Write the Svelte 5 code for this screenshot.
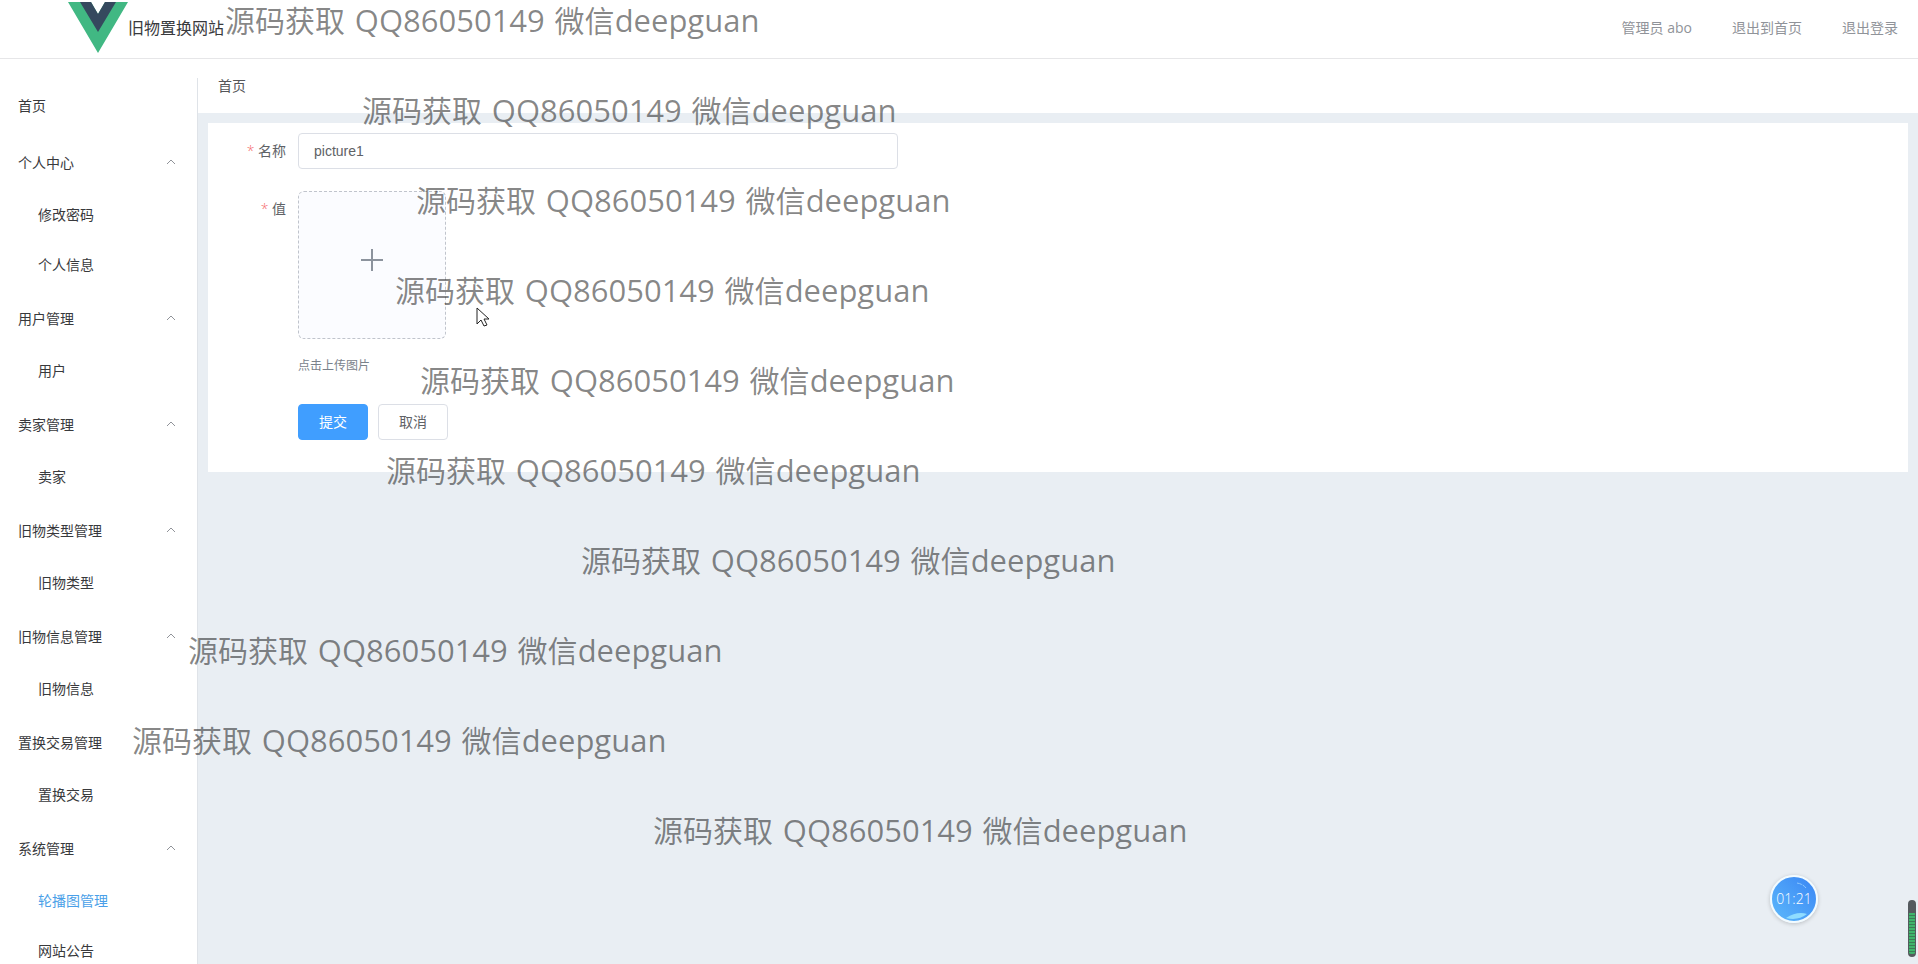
<script>
  const groups = [
    { title: '个人中心', items: ['修改密码', '个人信息'] },
    { title: '用户管理', items: ['用户'] },
    { title: '卖家管理', items: ['卖家'] },
    { title: '旧物类型管理', items: ['旧物类型'] },
    { title: '旧物信息管理', items: ['旧物信息'] },
    { title: '置换交易管理', items: ['置换交易'] },
    { title: '系统管理', items: ['轮播图管理', '网站公告'] }
  ];
  const active = '轮播图管理';
  const marks = [225, 362, 416, 395, 420, 386, 581, 188, 132, 653];
  let name = $state('picture1');
</script>

<div class="page">
  <header>
    <div class="brand">
      <svg class="logo" viewBox="0 0 60 51" aria-hidden="true">
        <path fill="#41b883" d="M0 0h23l7 12 7-12h23L30 51z" />
        <path fill="#35495e" d="M12 0h11l7 12 7-12h11L30 30z" />
      </svg>
      <span>旧物置换网站</span>
    </div>
    <nav class="user">
      <span>管理员 abo</span>
      <a href="#front">退出到首页</a>
      <a href="#logout">退出登录</a>
    </nav>
  </header>

  <div class="body">
    <aside>
      <a class="head" href="#home">首页</a>
      {#each groups as group}
        <button class="head" type="button" aria-expanded="true">
          {group.title}
          {#if group.title !== '置换交易管理'}
            <svg viewBox="0 0 12 12" aria-hidden="true"><path d="M2 8l4-4 4 4" /></svg>
          {/if}
        </button>
        {#each group.items as item}
          <a class="sub" class:active={item === active} href="#{item}">{item}</a>
        {/each}
      {/each}
    </aside>

    <main>
      <div class="crumb">首页</div>
      <form class="card" onsubmit={(e) => e.preventDefault()}>
        <div class="row">
          <label for="name"><i>*</i> 名称</label>
          <input id="name" type="text" bind:value={name} />
        </div>
        <div class="row">
          <label for="upload"><i>*</i> 值</label>
          <div>
            <button id="upload" class="upload" type="button" aria-label="点击上传图片">
              <svg viewBox="0 0 24 24" aria-hidden="true"><path d="M12 1v22M1 12h22" /></svg>
            </button>
            <p>点击上传图片</p>
          </div>
        </div>
        <div class="actions">
          <button class="btn primary" type="submit">提交</button>
          <button class="btn" type="button">取消</button>
        </div>
      </form>
    </main>
  </div>

  {#each marks as x, i}
    <div class="mark" style="left: {x}px; top: {i * 90}px">源码获取 <span class="qq">QQ86050149</span>{' '}微信<span>deepguan</span></div>
  {/each}

  <svg class="cursor" viewBox="0 0 13 20" aria-hidden="true">
    <path d="M1 1v16l4-4 3 6 3-1-3-6h5z" />
  </svg>
  <div class="timer">
    <svg viewBox="0 0 44 44" aria-hidden="true">
      <path d="M14 41q11-7 21-4-9 7-21 4z" fill="#8fdcff" />
      <path d="M25 6q6 1 9 5" fill="none" stroke="#8cc8ff" stroke-width="1" stroke-dasharray="5 1" />
    </svg>
    <span>01:21</span>
  </div>
  <div class="meter"></div>
</div>

<style>
  :global(body) {
    margin: 0;
    overflow: hidden;
  }
  .page {
    position: relative;
    display: flex;
    flex-direction: column;
    height: 100vh;
    overflow: hidden;
    background: #fff;
    color: #38393c;
    font: 400 14px/20px "Open Sans", "Noto Sans CJK SC", sans-serif;
  }
  a {
    color: inherit;
    text-decoration: none;
  }
  button,
  input {
    box-sizing: border-box;
    font: inherit;
    color: inherit;
  }
  header {
    flex: none;
    display: flex;
    justify-content: space-between;
    align-items: center;
    box-sizing: border-box;
    height: 59px;
    padding: 0 20px 2px 68px;
    border-bottom: 1px solid #e6e6e8;
  }
  .brand {
    display: flex;
    align-items: center;
    font-size: 16px;
  }
  .logo {
    width: 60px;
    height: 51px;
    margin-bottom: 2px;
  }
  .user {
    display: flex;
    gap: 40px;
    color: #909399;
  }
  .body {
    flex: 1;
    display: flex;
    min-height: 0;
  }
  aside {
    flex: none;
    box-sizing: border-box;
    width: 198px;
    margin-top: 19px;
    border-right: 1px solid #dfe3e8;
    overflow: hidden;
  }
  .head {
    display: flex;
    align-items: center;
    justify-content: space-between;
    width: 100%;
    box-sizing: border-box;
    height: 56px;
    padding: 0 20px 0 18px;
    border: 0;
    background: none;
  }
  button.head {
    padding-top: 2px;
  }
  .head svg {
    width: 12px;
    height: 12px;
    margin-bottom: 2px;
    fill: none;
    stroke: #909399;
  }
  .sub {
    display: flex;
    align-items: center;
    height: 50px;
    padding-left: 38px;
  }
  .active {
    color: #4a9fe8;
  }
  main {
    flex: 1;
    background: #e9eef3;
  }
  .crumb {
    height: 54px;
    box-sizing: border-box;
    padding: 17px 20px;
    background: #fff;
    color: #555659;
  }
  .card {
    margin: 10px;
    padding: 10px 10px 32px;
    background: #fff;
    color: #606266;
  }
  .row {
    display: flex;
    margin-bottom: 22px;
  }
  label {
    flex: none;
    width: 68px;
    margin-right: 12px;
    line-height: 36px;
    text-align: right;
  }
  i {
    color: #f56c6c;
    font-style: normal;
    font-weight: 300;
  }
  input {
    width: 600px;
    height: 36px;
    padding: 0 15px;
    border: 1px solid #dcdfe6;
    border-radius: 4px;
    background: #fff;
    font-family: "Liberation Sans", sans-serif;
  }
  .upload {
    display: grid;
    place-items: center;
    width: 148px;
    height: 148px;
    padding: 0 0 10px;
    border: 1px dashed #c0c4cc;
    border-radius: 6px;
    background: #fbfcff;
  }
  .upload svg {
    width: 24px;
    height: 24px;
    stroke: #8c939d;
    stroke-width: 2;
  }
  p {
    margin: 17px 0 6px;
    font-size: 12px;
    color: #7a828b;
  }
  .actions {
    display: flex;
    gap: 10px;
    padding-left: 80px;
  }
  .btn {
    width: 70px;
    height: 36px;
    border: 1px solid #dcdfe6;
    border-radius: 4px;
    background: #fff;
  }
  .primary {
    border-color: #409eff;
    background: #409eff;
    color: #fff;
  }
  .mark {
    position: absolute;
    font: 400 30px/40px "Open Sans", "Noto Sans CJK SC", sans-serif;
    color: rgba(0, 0, 0, 0.48);
    white-space: pre;
    pointer-events: none;
  }
  .mark span {
    font-size: 31px;
  }
  .mark .qq {
    margin: 0 2px;
  }
  .cursor {
    position: absolute;
    left: 476px;
    top: 307px;
    width: 13px;
    height: 20px;
    fill: #fff;
    stroke: #222;
  }
  .timer {
    position: absolute;
    right: 100px;
    bottom: 41px;
    display: grid;
    place-items: center;
    width: 44px;
    height: 44px;
    border: 2px solid #f2fbff;
    border-radius: 50%;
    background: linear-gradient(45deg, #5cb8fb, #3a86f4);
    box-shadow: 0 1px 4px rgba(0, 0, 0, 0.2);
    color: #fff;
    font-weight: 300;
  }
  .timer svg,
  .timer span {
    grid-area: 1 / 1;
  }
  .meter {
    position: absolute;
    right: 2px;
    bottom: 7px;
    box-sizing: border-box;
    width: 8px;
    height: 57px;
    border: solid #555a5e;
    border-width: 13px 1px 3px;
    border-radius: 4px;
    background: repeating-linear-gradient(#3fb56c 0 2px, #3b7d56 2px 3px);
  }
</style>
